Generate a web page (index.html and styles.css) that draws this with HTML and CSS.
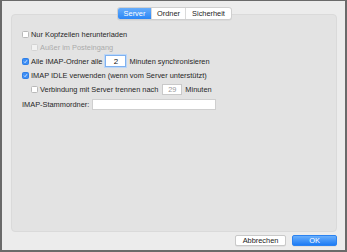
FILE: index.html
```html
<!DOCTYPE html>
<html lang="de">
<head>
<meta charset="utf-8">
<title>Account</title>
<link rel="stylesheet" href="styles.css">
</head>
<body>
<div class="window">
  <div class="tabs">
    <span class="tab active">Server</span>
    <span class="tab">Ordner</span>
    <span class="tab">Sicherheit</span>
  </div>
  <div class="group">
    <div class="row r1"><span class="cb"></span><span>Nur Kopfzeilen herunterladen</span></div>
    <div class="row r2 indent disabled"><span class="cb"></span><span>Außer im Posteingang</span></div>
    <div class="row r3"><span class="cb on"><svg viewBox="0 0 8 8"><path d="M1.6 4.2 L3.3 5.9 L6.4 1.9" /></svg></span><span>Alle IMAP-Ordner alle</span><span class="field small focus">2</span><span>Minuten synchronisieren</span></div>
    <div class="row r4"><span class="cb on"><svg viewBox="0 0 8 8"><path d="M1.6 4.2 L3.3 5.9 L6.4 1.9" /></svg></span><span>IMAP IDLE verwenden (wenn vom Server unterstützt)</span></div>
    <div class="row r5 indent"><span class="cb"></span><span>Verbindung mit Server trennen nach</span><span class="field small dim">29</span><span>Minuten</span></div>
    <div class="row r6"><span class="label">IMAP-Stammordner:</span><span class="field wide"></span></div>
  </div>
  <div class="buttons">
    <span class="btn">Abbrechen</span>
    <span class="btn primary">OK</span>
  </div>
</div>
</body>
</html>
```

FILE: styles.css
```css
html, body {
  margin: 0;
  padding: 0;
}
body {
  width: 347px;
  height: 252px;
  background: #6a6a6a;
  font-family: "Liberation Sans", Arial, sans-serif;
  font-size: 7.4px;
  color: #262626;
  overflow: hidden;
}
.window {
  margin: 1px 2px 0 2px;
  height: 249px;
  box-sizing: border-box;
  background: #ececec;
  padding: 6px 8px 0 9px;
  display: flex;
  flex-direction: column;
}
.tabs {
  align-self: center;
  display: flex;
  height: 11px;
  margin-left: 1px;
  border: 1px solid #cfcfcf;
  border-radius: 3px;
  background: #fff;
  position: relative;
  z-index: 1;
  box-shadow: 0 0.5px 0.5px rgba(0,0,0,0.08);
}
.tab {
  display: flex;
  align-items: center;
  justify-content: center;
  height: 11px;
  color: #222;
  border-left: 1px solid #dadada;
}
.tab:nth-child(1) { width: 33px; border-left: none; border-radius: 2px 0 0 2px; }
.tab:nth-child(2) { width: 33px; }
.tab:nth-child(3) { width: 45px; }
.tab.active {
  background: linear-gradient(#67adfb, #2a86f6);
  color: #fff;
}
.group {
  margin-top: -6px;
  height: 218px;
  box-sizing: border-box;
  background: #e3e3e3;
  border: 1px solid #dadada;
  border-radius: 4px;
  padding: 12px 10px 0 10px;
  display: flex;
  flex-direction: column;
}
.row {
  display: flex;
  align-items: center;
  height: 14px;
  white-space: nowrap;
}
.row.r2 { height: 13px; }
.row.r6 { height: 16px; }
.row.indent { padding-left: 9px; }
.row.disabled { color: #ababab; }
.cb {
  width: 7px;
  height: 7px;
  box-sizing: border-box;
  border: 1px solid #b9b9b9;
  border-radius: 1.5px;
  background: #fff;
  margin-right: 2px;
  flex: none;
  display: flex;
  align-items: center;
  justify-content: center;
}
.disabled .cb { border-color: #d3d3d3; background: #f2f2f2; }
.cb.on {
  background: #3d8ef5;
  border-color: #2f7fe6;
}
.cb svg {
  width: 7px;
  height: 7px;
}
.cb path {
  fill: none;
  stroke: #fff;
  stroke-width: 1.2;
}
.field {
  display: inline-flex;
  align-items: center;
  justify-content: center;
  background: #fff;
  border: 1px solid #c9c9c9;
  box-sizing: border-box;
  flex: none;
}
.field.small {
  width: 20px;
  height: 11px;
  margin: 0 3px 0 3px;
}
.field.focus {
  height: 12px;
  width: 21px;
  border: 1px solid #7fb1f0;
  box-shadow: 0 0 0 1px #bcd7f7;
  font-size: 8px;
  color: #111;
}
.field.dim {
  color: #9a9a9a;
  margin-left: 4px;
}
.label { margin-right: 3px; }
.field.wide {
  width: 124px;
  height: 11px;
  border-color: #cfcfcf;
}
.buttons {
  display: flex;
  justify-content: flex-end;
  margin-top: 3px;
  gap: 6px;
}
.btn {
  display: flex;
  align-items: center;
  justify-content: center;
  height: 11px;
  box-sizing: border-box;
  border: 1px solid #c9c9c9;
  border-radius: 2px;
  background: #fff;
  width: 51px;
  color: #222;
  box-shadow: 0 0.5px 0.5px rgba(0,0,0,0.1);
}
.btn.primary {
  width: 45px;
  border-color: #2b82f0;
  background: linear-gradient(#69aefb, #1d7cf5);
  color: #fff;
}
```
